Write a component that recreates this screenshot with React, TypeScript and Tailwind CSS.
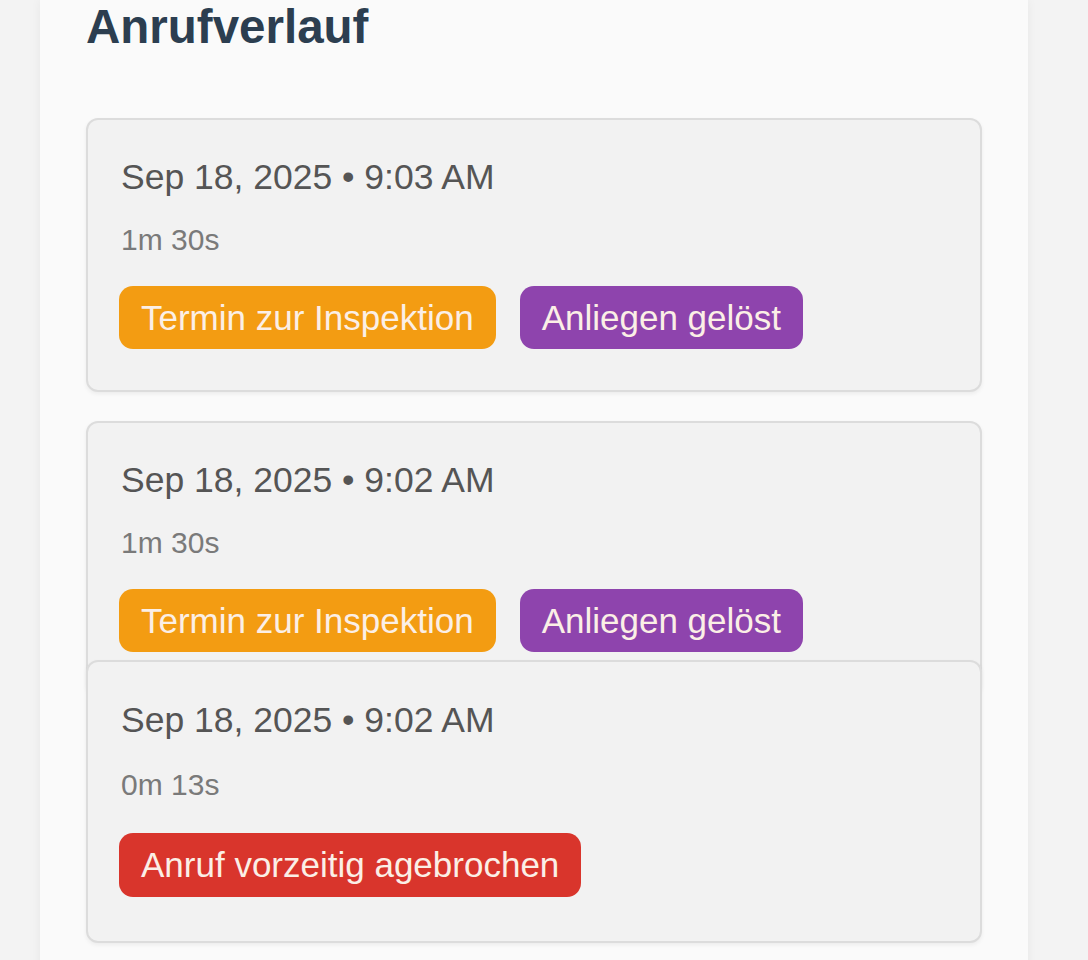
const CALLS = [
  {
    when: "Sep 18, 2025 • 9:03 AM",
    duration: "1m 30s",
    tags: [
      { label: "Termin zur Inspektion", color: "bg-[#f39c12]" },
      { label: "Anliegen gelöst", color: "bg-[#8e44ad]" },
    ],
  },
  {
    when: "Sep 18, 2025 • 9:02 AM",
    duration: "1m 30s",
    tags: [
      { label: "Termin zur Inspektion", color: "bg-[#f39c12]" },
      { label: "Anliegen gelöst", color: "bg-[#8e44ad]" },
    ],
  },
  {
    when: "Sep 18, 2025 • 9:02 AM",
    duration: "0m 13s",
    tags: [{ label: "Anruf vorzeitig agebrochen", color: "bg-[#d9352c]" }],
  },
];

function CallCard({
  call,
  last = false,
}: {
  call: (typeof CALLS)[number];
  last?: boolean;
}) {
  // the bottom card sits slightly over the one above it
  return (
    <div
      className={
        last
          ? "relative z-10 -mt-[64px] rounded-[12px] border-2 border-[#dcdcdc] bg-[#f2f2f2] px-[33px] pt-[38px] pb-[44px] shadow-[0_2px_4px_rgba(0,0,0,0.06)]"
          : "relative rounded-[12px] border-2 border-[#dcdcdc] bg-[#f2f2f2] px-[33px] pt-[37px] pb-[41px] shadow-[0_2px_4px_rgba(0,0,0,0.06)]"
      }
    >
      <p className="text-[35.5px] leading-[40px] text-[#555555]">{call.when}</p>
      <p
        className={
          (last ? "mt-[28px] " : "mt-[26px] ") +
          "text-[30px] leading-[34px] text-[#7a7a7a]"
        }
      >
        {call.duration}
      </p>
      <div
        className={
          (last ? "mt-[31px] " : "mt-[29px] ") + "-ml-[2px] flex flex-wrap gap-[24px]"
        }
      >
        {call.tags.map((t) => (
          <span
            key={t.label}
            className={
              `${t.color} rounded-[14px] px-[22px] py-[11px] text-[35px] text-[#fbefe6] ` +
              (last ? "leading-[42px]" : "leading-[41px]")
            }
          >
            {t.label}
          </span>
        ))}
      </div>
    </div>
  );
}

export default function App() {
  return (
    <div
      className="min-h-screen bg-[#f3f3f3] px-[40px] overflow-hidden"
      style={{ fontFamily: '"Liberation Sans", Arial, sans-serif' }}
    >
      <div className="min-h-screen w-[988px] bg-[#fafafa] px-[46px] pb-[40px] shadow-[0_0_10px_rgba(0,0,0,0.05)]">
        <h1 className="text-[47.5px] leading-[54px] font-bold text-[#2c3e50]">
          Anrufverlauf
        </h1>
        <div className="mt-[64px] flex flex-col gap-[29px]">
          <CallCard call={CALLS[0]} />
          <CallCard call={CALLS[1]} />
          <CallCard call={CALLS[2]} last />
        </div>
      </div>
    </div>
  );
}
